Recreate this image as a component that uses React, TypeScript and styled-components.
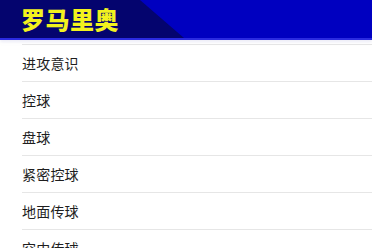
import React from "react";
import styled, { createGlobalStyle } from "styled-components";

const Global = createGlobalStyle`
  html, body { margin: 0; padding: 0; background: #fff; }
  body { font-family: "Noto Sans CJK SC", "Noto Sans", sans-serif; overflow: hidden; }
`;

const Page = styled.div`
  width: 372px;
  height: 248px;
  overflow: hidden;
  background: #fff;
`;

const Header = styled.header`
  position: relative;
  z-index: 2;
  height: 38px;
  background: #0000c0;
  border-bottom: 2px solid #2a2ae0;
  box-shadow: 0 2px 3px rgba(200, 200, 230, 0.35);
  display: flex;
  align-items: center;
  padding-left: 21px;
  &::before {
    content: "";
    position: absolute;
    inset: 0;
    background: #04046e;
    clip-path: polygon(0 0, 140px 0, 184px 100%, 0 100%);
  }
`;

const Title = styled.h1`
  position: relative;
  margin: 0;
  font-size: 24px;
  line-height: 1;
  font-weight: 900;
  color: #f2f21e;
  letter-spacing: 0.5px;
`;

const List = styled.ul`
  list-style: none;
  margin: 0;
  padding: 0;
`;

const Row = styled.li<{ $partial?: boolean }>`
  height: ${(p) => (p.$partial ? "4px" : "36px")};
  margin-left: 22px;
  border-bottom: 1px solid #e6e6e6;
  display: flex;
  align-items: center;
  font-size: 14px;
  color: #1e1e1e;
  letter-spacing: 0.2px;
  overflow: hidden;
`;

const items = ["进攻意识", "控球", "盘球", "紧密控球", "地面传球", "空中传球"];

export default function App() {
  return (
    <Page>
      <Global />
      <Header>
        <Title>罗马里奥</Title>
      </Header>
      <List>
        <Row $partial />
        {items.map((t) => (
          <Row key={t}>{t}</Row>
        ))}
      </List>
    </Page>
  );
}
